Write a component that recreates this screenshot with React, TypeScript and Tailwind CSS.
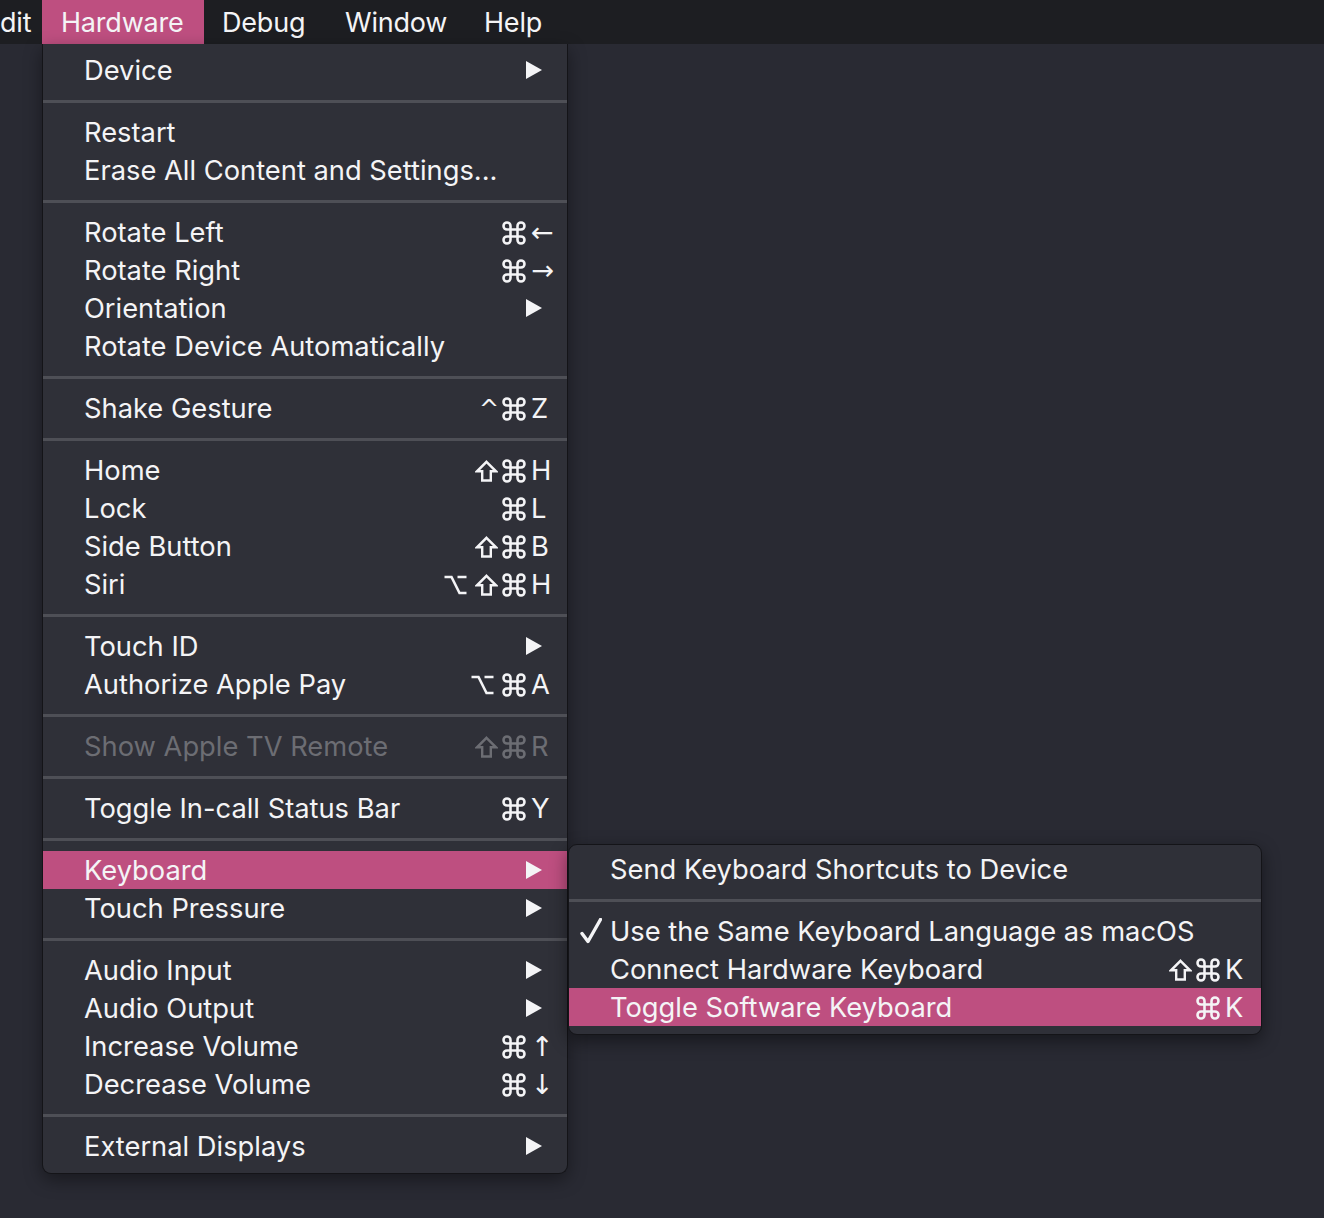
import React from 'react';
import { Command } from 'lucide-react';

type Item =
  | { kind: 'sep' }
  | {
      kind?: 'item';
      label: string;
      mods?: string;
      keyChar?: string;
      arrow?: boolean;
      disabled?: boolean;
      active?: boolean;
      checked?: boolean;
    };

const font = { fontFamily: 'Inter, "Noto Sans", "DejaVu Sans", sans-serif' };
const glyphFont = { fontFamily: '"DejaVu Sans", sans-serif' };

const mainMenu: Item[] = [
  { label: 'Device', arrow: true },
  { kind: 'sep' },
  { label: 'Restart' },
  { label: 'Erase All Content and Settings...' },
  { kind: 'sep' },
  { label: 'Rotate Left', mods: 'C', keyChar: '←' },
  { label: 'Rotate Right', mods: 'C', keyChar: '→' },
  { label: 'Orientation', arrow: true },
  { label: 'Rotate Device Automatically' },
  { kind: 'sep' },
  { label: 'Shake Gesture', mods: '^C', keyChar: 'Z' },
  { kind: 'sep' },
  { label: 'Home', mods: 'SC', keyChar: 'H' },
  { label: 'Lock', mods: 'C', keyChar: 'L' },
  { label: 'Side Button', mods: 'SC', keyChar: 'B' },
  { label: 'Siri', mods: 'OSC', keyChar: 'H' },
  { kind: 'sep' },
  { label: 'Touch ID', arrow: true },
  { label: 'Authorize Apple Pay', mods: 'OC', keyChar: 'A' },
  { kind: 'sep' },
  { label: 'Show Apple TV Remote', mods: 'SC', keyChar: 'R', disabled: true },
  { kind: 'sep' },
  { label: 'Toggle In-call Status Bar', mods: 'C', keyChar: 'Y' },
  { kind: 'sep' },
  { label: 'Keyboard', arrow: true, active: true },
  { label: 'Touch Pressure', arrow: true },
  { kind: 'sep' },
  { label: 'Audio Input', arrow: true },
  { label: 'Audio Output', arrow: true },
  { label: 'Increase Volume', mods: 'C', keyChar: '↑' },
  { label: 'Decrease Volume', mods: 'C', keyChar: '↓' },
  { kind: 'sep' },
  { label: 'External Displays', arrow: true },
];

const keyboardMenu: Item[] = [
  { label: 'Send Keyboard Shortcuts to Device' },
  { kind: 'sep' },
  { label: 'Use the Same Keyboard Language as macOS', checked: true },
  { label: 'Connect Hardware Keyboard', mods: 'SC', keyChar: 'K' },
  { label: 'Toggle Software Keyboard', mods: 'C', keyChar: 'K', active: true },
];

function Arrow() {
  return (
    <svg width="16" height="18" viewBox="0 0 16 18" className="mr-[12px]">
      <path d="M0 0 L16 9 L0 18 Z" fill="currentColor" />
    </svg>
  );
}

// modifier key symbols: C = command, S = shift, O = option, ^ = control
function Mod({ m }: { m: string }) {
  if (m === 'C') return <Command size={28} strokeWidth={2.2} className="-mx-[2px]" />;
  if (m === 'S')
    return (
      <svg width="23" height="22" viewBox="0 0 23 22" className="mr-[4px]">
        <path
          d="M11.5 1.8 L21 11.3 H15.8 V20.5 H7.2 V11.3 H2 Z"
          fill="none"
          stroke="currentColor"
          strokeWidth="2.4"
          strokeLinejoin="miter"
        />
      </svg>
    );
  if (m === 'O')
    return (
      <svg width="23" height="20" viewBox="0 0 23 20" className="mr-[8px]">
        <path
          d="M0.5 2 H7.5 L15.5 18 H22.5 M13.5 2 H22.5"
          fill="none"
          stroke="currentColor"
          strokeWidth="2.6"
        />
      </svg>
    );
  return (
    <span className="mr-[3px] text-[24px] leading-none" style={glyphFont}>
      ^
    </span>
  );
}

function Row({ item, children }: { item: Extract<Item, { label: string }>; children?: React.ReactNode }) {
  const color = item.disabled ? 'text-[#6c6d73]' : 'text-[#f4f4f6]';
  return (
    <div
      className={`relative flex h-[38px] items-center pl-[41px] pr-[13px] ${color} ${
        item.active ? 'bg-[#be4f80]' : ''
      }`}
    >
      {item.checked && (
        <svg width="22" height="26" viewBox="0 0 22 26" className="absolute left-[11px] top-[6px]">
          <path
            d="M2 15.5 L8 23.5 L20.5 1.5"
            fill="none"
            stroke="currentColor"
            strokeWidth="3.4"
            strokeLinecap="round"
            strokeLinejoin="round"
          />
        </svg>
      )}
      <span className="flex-1 whitespace-nowrap pt-[2px] text-[27.3px] leading-none">{item.label}</span>
      {item.arrow && <Arrow />}
      {item.keyChar && (
        <div className="flex items-center pt-[1px]">
          <div className="flex items-center justify-end">
            {item.mods!.split('').map((m, i) => (
              <Mod key={i} m={m} />
            ))}
          </div>
          <span
            className="ml-[5px] w-[23px] text-[27.3px] leading-none"
            style={'←→↑↓'.includes(item.keyChar) ? glyphFont : undefined}
          >
            {item.keyChar}
          </span>
        </div>
      )}
      {children}
    </div>
  );
}

function Separator() {
  return (
    <div className="flex h-[24px] items-center">
      <div className="h-[3px] w-full bg-[#4e4f56]" />
    </div>
  );
}

function SubMenu() {
  return (
    <div className="absolute left-[calc(100%+1px)] top-[-7px] z-10 w-[694px] rounded-[9px] border border-[#141418] bg-[#2f3038] pt-[5px] pb-[8px] shadow-[0_6px_18px_rgba(0,0,0,0.45)]">
      {keyboardMenu.map((it, i) =>
        'label' in it ? <Row key={i} item={it} /> : <Separator key={i} />,
      )}
    </div>
  );
}

export default function App() {
  const bar = [
    { label: 'dit', w: 'w-[42px]', pad: 'pl-0' },
    { label: 'Hardware', w: 'w-[162px]', pad: 'pl-[19px]', active: true },
    { label: 'Debug', w: 'w-[122px]', pad: 'pl-[18px]' },
    { label: 'Window', w: 'w-[140px]', pad: 'pl-[19px]' },
    { label: 'Help', w: 'w-[97px]', pad: 'pl-[18px]' },
  ];

  return (
    <div className="relative h-[1218px] w-[1324px] overflow-hidden bg-[#292a33]" style={font}>
      {/* Menu bar */}
      <div className="flex h-[44px] bg-[#1d1e22] text-[#f4f4f6]">
        {bar.map((b) => (
          <div
            key={b.label}
            className={`flex h-full items-center ${b.w} ${b.pad} ${b.active ? 'bg-[#be4f80]' : ''}`}
          >
            <span className="text-[27px] leading-none tracking-[-0.2px]">{b.label}</span>
          </div>
        ))}
      </div>

      {/* Hardware dropdown */}
      <div className="absolute left-[42px] top-[44px] w-[526px] rounded-b-[9px] border border-t-0 border-[#141418] bg-[#2f3038] pt-[7px] pb-[8px] shadow-[0_6px_18px_rgba(0,0,0,0.4)]">
        {mainMenu.map((it, i) =>
          'label' in it ? (
            <Row key={i} item={it}>
              {it.label === 'Keyboard' && <SubMenu />}
            </Row>
          ) : (
            <Separator key={i} />
          ),
        )}
      </div>
    </div>
  );
}
